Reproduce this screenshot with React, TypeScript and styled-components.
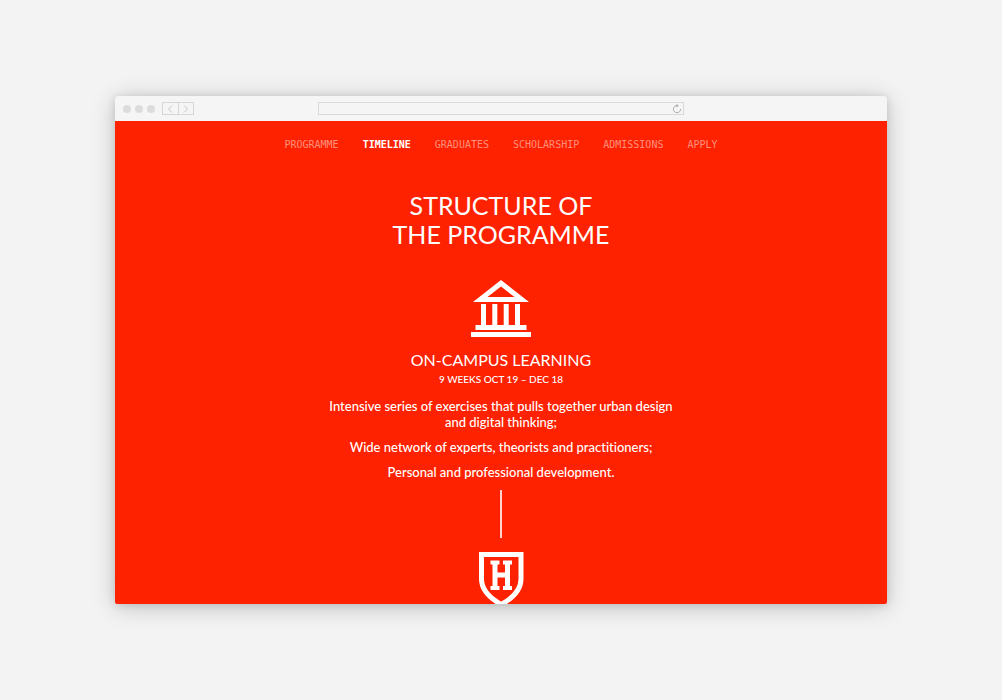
import React from "react";
import styled, { createGlobalStyle } from "styled-components";

const GlobalStyle = createGlobalStyle`
  *, *::before, *::after { box-sizing: border-box; }
  body { margin: 0; background: #f3f3f3; }
`;

const Page = styled.div`
  display: flex;
  height: 100vh;
  padding: 96px 115px;
  background: #f3f3f3;
`;

const BrowserWindow = styled.div`
  display: flex;
  flex: 1;
  flex-direction: column;
  min-width: 0;
  overflow: hidden;
  border-radius: 4px 4px 2px 2px;
  box-shadow: 0 3px 24px rgba(0, 0, 0, 0.2), 0 1px 8px rgba(0, 0, 0, 0.12);
`;

const Toolbar = styled.div`
  display: grid;
  flex: none;
  grid-template-columns: 1fr minmax(0, 366px) 1fr;
  align-items: center;
  height: 25px;
  padding: 0 8px;
  background: #f5f5f5;
`;

const ToolbarControls = styled.div`
  display: flex;
  align-items: center;
  gap: 7px;
`;

const WindowDots = styled.div`
  display: flex;
  gap: 4px;
`;

const Dot = styled.span`
  width: 8px;
  height: 8px;
  border-radius: 50%;
  background: #dcdcdc;
`;

const HistoryButtons = styled.div`
  display: flex;
  width: 32px;
  height: 13px;
  border: 1px solid #d6d6d6;
`;

const HistoryButton = styled.button`
  display: flex;
  flex: 1;
  align-items: center;
  justify-content: center;
  padding: 0;
  border: 0;
  background: none;
  color: #c6c6c6;

  & + & { border-left: 1px solid #d6d6d6; }
`;

const AddressBar = styled.div`
  display: flex;
  height: 13px;
  border: 1px solid #d9d9d9;
`;

const AddressInput = styled.input`
  flex: 1;
  min-width: 0;
  padding: 0 4px;
  border: 0;
  outline: 0;
  background: none;
  font: 10px "Liberation Sans", sans-serif;
`;

const ReloadButton = styled.button`
  display: flex;
  align-items: center;
  justify-content: center;
  width: 12px;
  padding: 0;
  border: 0;
  background: none;
  color: #aaa;
`;

const Screen = styled.div`
  flex: 1;
  min-height: 0;
  overflow: hidden;
  background: #ff2200;
  color: #fff;
  font-family: Lato, sans-serif;
  font-variant-ligatures: none;
  text-align: center;
`;

const Nav = styled.nav`
  display: flex;
  justify-content: center;
  gap: 24px;
  padding-top: 17px;
  font: 10px/14px "DejaVu Sans Mono", monospace;
`;

const NavLink = styled.a<{ $active?: boolean }>`
  color: ${({ $active }) => ($active ? "#fff" : "#ff8f7d")};
  font-weight: ${({ $active }) => ($active ? 700 : 400)};
  text-decoration: none;
`;

const Main = styled.main`
  display: flex;
  flex-direction: column;
  align-items: center;
`;

const Title = styled.h1`
  margin: 39px 0 31px;
  font-size: 25px;
  font-weight: 400;
  line-height: 29px;
`;

const Stage = styled.section`
  display: flex;
  flex-direction: column;
  align-items: center;
  margin-bottom: 1px;
`;

const StageTitle = styled.h2`
  margin: 11px 0 0;
  font-size: 16px;
  font-weight: 400;
  line-height: 22px;
`;

const StageDates = styled.p`
  margin: 0 0 11px;
  font-size: 10px;
  font-weight: 500;
  line-height: 16px;
`;

const StageText = styled.p`
  max-width: 360px;
  margin: 0 0 9px;
  font-size: 13px;
  font-weight: 500;
  line-height: 16px;
`;

const Connector = styled.div`
  width: 2px;
  height: 48px;
  margin-bottom: 14px;
  background: #ffd3cc;
`;

const sections = ["Programme", "Timeline", "Graduates", "Scholarship", "Admissions", "Apply"];

const CampusIcon = () => (
  <svg width="60" height="58" viewBox="0 0 60 58" fill="#fff" aria-hidden="true">
    <path fillRule="evenodd" d="M30 0 58 22H2ZM30 6.500 16.500 17H43.500Z" />
    <path d="M10 24h5v21h-5zM21.300 24h5v21h-5zM32.700 24h5v21h-5zM44 24h5v21h-5z" />
    <path d="M4.500 45h51v5h-51zM0 52h60v5H0z" />
  </svg>
);

const ShieldIcon = () => (
  <svg width="46" height="56" viewBox="0 0 46 56" fill="none" aria-hidden="true">
    <path d="M3.500 2.500H43V27C43 38 34 46.500 23.250 52.500C12.500 46.500 3.500 38 3.500 27Z" stroke="#fff" strokeWidth="5" />
    <path
      fill="#fff"
      d="M12.500 8.500H21.500V12.500H19.500V20.500H27V12.500H25V8.500H34V12.500H32V34H34V38H25V34H27V25.500H19.500V34H21.500V38H12.500V34H14.500V12.500H12.500Z"
    />
  </svg>
);

export default function App() {
  return (
    <>
      <GlobalStyle />
      <Page>
        <BrowserWindow>
          <Toolbar>
            <ToolbarControls>
              <WindowDots>
                <Dot />
                <Dot />
                <Dot />
              </WindowDots>
              <HistoryButtons>
                <HistoryButton aria-label="Back">
                  <svg width="6" height="8" viewBox="0 0 6 8" fill="none" stroke="currentColor">
                    <path d="M5 .5 1.500 4 5 7.500" />
                  </svg>
                </HistoryButton>
                <HistoryButton aria-label="Forward">
                  <svg width="6" height="8" viewBox="0 0 6 8" fill="none" stroke="currentColor">
                    <path d="M1 .5 4.500 4 1 7.500" />
                  </svg>
                </HistoryButton>
              </HistoryButtons>
            </ToolbarControls>
            <AddressBar>
              <AddressInput type="text" aria-label="Address" />
              <ReloadButton aria-label="Reload">
                <svg width="10" height="10" viewBox="0 0 10 10" fill="none" stroke="currentColor">
                  <path d="M5.500 1.500A3.600 3.600 0 1 0 8.600 5" />
                  <path d="M4.500 0 6.800 1.700 4.500 3.400Z" fill="currentColor" stroke="none" />
                </svg>
              </ReloadButton>
            </AddressBar>
          </Toolbar>
          <Screen>
            <Nav>
              {sections.map((name) => (
                <NavLink key={name} href={`#${name.toLowerCase()}`} $active={name === "Timeline"}>
                  {name.toUpperCase()}
                </NavLink>
              ))}
            </Nav>
            <Main>
              <Title>
                STRUCTURE OF
                <br />
                THE PROGRAMME
              </Title>
              <Stage>
                <CampusIcon />
                <StageTitle>ON-CAMPUS LEARNING</StageTitle>
                <StageDates>9 WEEKS OCT 19 – DEC 18</StageDates>
                <StageText>
                  Intensive series of exercises that pulls together urban design and digital thinking;
                </StageText>
                <StageText>Wide network of experts, theorists and practitioners;</StageText>
                <StageText>Personal and professional development.</StageText>
              </Stage>
              <Connector />
              <ShieldIcon />
            </Main>
          </Screen>
        </BrowserWindow>
      </Page>
    </>
  );
}
